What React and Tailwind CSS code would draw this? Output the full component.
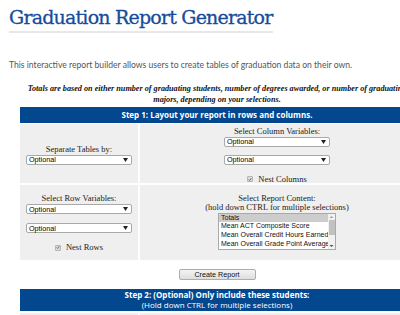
import React from "react";

const serif = { fontFamily: '"Liberation Serif", "Times New Roman", serif' };
const sans = { fontFamily: '"Liberation Sans", Arial, sans-serif' };

function FakeSelect() {
  return (
    <div
      className="flex h-[10px] w-[106px] items-center justify-between rounded-[2px] border border-[#a9a9a9] bg-white pl-[2px] pr-[3px] text-[7.2px] leading-none text-black"
      style={sans}
    >
      <span>Optional</span>
      <svg width="5" height="4" viewBox="0 0 5 4">
        <path d="M0 0 L5 0 L2.5 4 Z" fill="#222" />
      </svg>
    </div>
  );
}

function Check({ label }) {
  return (
    <div className="flex items-center gap-[5px]">
      <div className="flex h-[6px] w-[6px] items-center justify-center rounded-[1px] border border-[#b5b5b5] bg-[#dcdcdc]">
        <svg width="5" height="5" viewBox="0 0 6 6">
          <path d="M1 3 L2.5 4.5 L5 1" stroke="#555" strokeWidth="1.2" fill="none" />
        </svg>
      </div>
      <span className="text-[8.5px] leading-none text-[#222]" style={serif}>
        {label}
      </span>
    </div>
  );
}

export default function App() {
  return (
    <div className="h-[315px] w-[400px] overflow-hidden bg-white">
      <div className="w-[440px]">
        <div className="pl-[9px] pt-[4px]">
          <h1
            className="inline-block whitespace-nowrap border-b-2 border-[#e8e8e8] pb-[1px] text-[19px] leading-[26px] text-[#164c9a]"
            style={{ fontFamily: '"DejaVu Serif", serif', letterSpacing: "-0.8px", WebkitTextStroke: "0.3px #164c9a" }}
          >
            Graduation Report Generator
          </h1>
        </div>
        <p
          className="ml-[9px] mt-[26px] whitespace-nowrap text-[8.6px] leading-[12px] text-[#555]"
          style={{ fontFamily: 'Lato, sans-serif' }}
        >
          This interactive report builder allows users to create tables of graduation data on their own.
        </p>
        <div className="ml-[20px] w-[394px]">
          <div
            className="mt-[12px] text-center text-[8.2px] font-bold italic leading-[11px] text-[#111]"
            style={serif}
          >
            <div className="whitespace-nowrap">
              Totals are based on either number of graduating students, number of degrees awarded, or number of graduating
            </div>
            <div>majors, depending on your selections.</div>
          </div>
          <div
            className="mt-[2px] flex h-[16px] items-center justify-center bg-[#03478f] text-[8px] font-bold text-white"
            style={{ fontFamily: '"Open Sans", sans-serif' }}
          >
            Step 1: Layout your report in rows and columns.
          </div>
          <div className="mt-[1px] grid grid-cols-[118px_1fr] grid-rows-[59px_75px] gap-[2px] bg-white">
            <div className="flex flex-col items-center justify-center bg-[#efefef] pt-[3px]">
              <div className="text-[8.5px] leading-[9px] text-[#222]" style={serif}>
                Separate Tables by:
              </div>
              <div className="mt-[1px]">
                <FakeSelect />
              </div>
            </div>
            <div className="flex flex-col items-center bg-[#efefef] pt-[3px]">
              <div className="text-[8.5px] leading-[9px] text-[#222]" style={serif}>
                Select Column Variables:
              </div>
              <div className="mt-[1px]">
                <FakeSelect />
              </div>
              <div className="mt-[8px]">
                <FakeSelect />
              </div>
              <div className="mt-[10px]">
                <Check label="Nest Columns" />
              </div>
            </div>
            <div className="flex flex-col items-center justify-center bg-[#efefef] pt-[1px]">
              <div className="text-[8.5px] leading-[9px] text-[#222]" style={serif}>
                Select Row Variables:
              </div>
              <div className="mt-[1px]">
                <FakeSelect />
              </div>
              <div className="mt-[9px]">
                <FakeSelect />
              </div>
              <div className="mt-[10px]">
                <Check label="Nest Rows" />
              </div>
            </div>
            <div className="flex flex-col items-center justify-center bg-[#efefef] pb-[2px]">
              <div className="text-center text-[8.5px] leading-[9px] text-[#222]" style={serif}>
                Select Report Content:
                <br />
                <span className="whitespace-nowrap">(hold down CTRL for multiple selections)</span>
              </div>
              <div
                className="mt-[1px] flex h-[37px] w-[118px] border border-[#a9a9a9] bg-white text-[7px] leading-[8.7px] text-[#111]"
                style={sans}
              >
                <div className="flex-1 overflow-hidden whitespace-nowrap">
                  <div className="bg-[#cdcdcd] pl-[2px]">Totals</div>
                  <div className="pl-[2px]">Mean ACT Composite Score</div>
                  <div className="pl-[2px]">Mean Overall Credit Hours Earned</div>
                  <div className="pl-[2px]">Mean Overall Grade Point Average</div>
                </div>
                <div className="flex w-[7px] flex-col items-center bg-[#f1f1f1]">
                  <svg width="5" height="6" viewBox="0 0 5 6">
                    <path d="M0.5 4 L2.5 2 L4.5 4 Z" fill="#a3a3a3" />
                  </svg>
                  <div className="h-[15px] w-[6px] bg-[#c1c1c1]" />
                  <div className="flex-1" />
                  <svg width="5" height="6" viewBox="0 0 5 6">
                    <path d="M0.5 2 L2.5 4 L4.5 2 Z" fill="#505050" />
                  </svg>
                </div>
              </div>
            </div>
          </div>
          <div className="mt-[9px] flex justify-center">
            <button
              className="h-[11px] w-[77px] rounded-[2px] border border-[#adadad] bg-gradient-to-b from-[#f4f4f4] to-[#dedede] text-[7.2px] leading-none text-[#111]"
              style={sans}
            >
              Create Report
            </button>
          </div>
          <div
            className="mt-[9px] flex h-[22px] flex-col items-center justify-center bg-[#03478f] text-[8px] leading-[10px] text-white"
            style={{ fontFamily: '"Open Sans", sans-serif' }}
          >
            <div className="font-bold">Step 2: (Optional) Only include these students:</div>
            <div>(Hold down CTRL for multiple selections)</div>
          </div>
          <div className="mt-[2px] grid grid-cols-[118px_1fr] gap-[2px]">
            <div className="h-[20px] bg-[#efefef]" />
            <div className="h-[20px] bg-[#efefef]" />
          </div>
        </div>
      </div>
    </div>
  );
}
